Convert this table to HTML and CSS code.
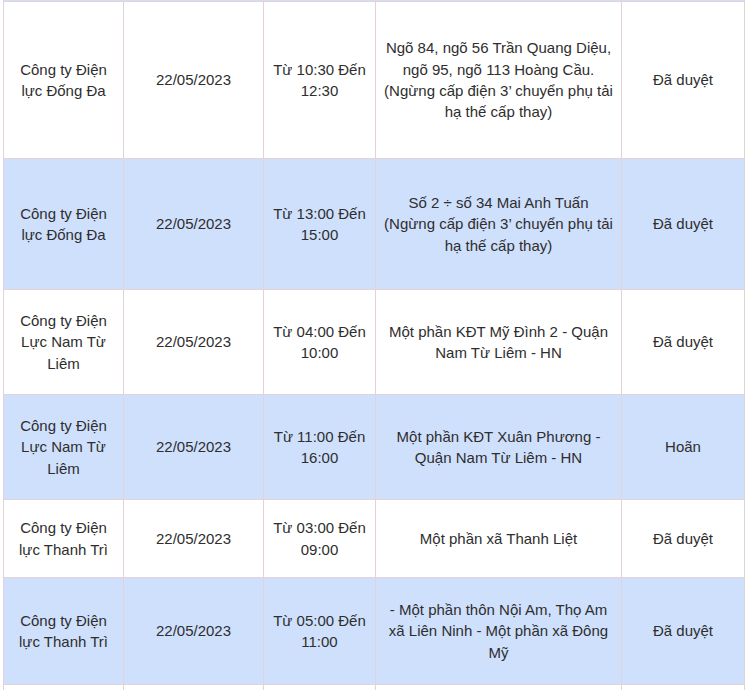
FILE: index.html
```html
<!DOCTYPE html>
<html lang="vi">
<head>
<meta charset="utf-8">
<link rel="stylesheet" href="styles.css">
</head>
<body>
<table class="grid">
  <colgroup>
    <col class="c1"><col class="c2"><col class="c3"><col class="c4"><col class="c5">
  </colgroup>
  <tbody>
    <tr class="tail blue"><td></td><td></td><td></td><td></td><td></td></tr>
    <tr class="r1">
      <td>Công ty Điện lực Đống Đa</td>
      <td>22/05/2023</td>
      <td>Từ 10:30 Đến 12:30</td>
      <td>Ngõ 84, ngõ 56 Trần Quang Diệu, ngõ 95, ngõ 113 Hoàng Cầu. (Ngừng cấp điện 3’ chuyển phụ tải hạ thế cấp thay)</td>
      <td>Đã duyệt</td>
    </tr>
    <tr class="r2 blue">
      <td>Công ty Điện lực Đống Đa</td>
      <td>22/05/2023</td>
      <td>Từ 13:00 Đến 15:00</td>
      <td>Số 2 ÷ số 34 Mai Anh Tuấn (Ngừng cấp điện 3’ chuyển phụ tải hạ thế cấp thay)</td>
      <td>Đã duyệt</td>
    </tr>
    <tr class="r3">
      <td>Công ty Điện Lực Nam Từ Liêm</td>
      <td>22/05/2023</td>
      <td>Từ 04:00 Đến 10:00</td>
      <td>Một phần KĐT Mỹ Đình 2 - Quận Nam Từ Liêm - HN</td>
      <td>Đã duyệt</td>
    </tr>
    <tr class="r4 blue">
      <td>Công ty Điện Lực Nam Từ Liêm</td>
      <td>22/05/2023</td>
      <td>Từ 11:00 Đến 16:00</td>
      <td>Một phần KĐT Xuân Phương - Quận Nam Từ Liêm - HN</td>
      <td>Hoãn</td>
    </tr>
    <tr class="r5">
      <td>Công ty Điện lực Thanh Trì</td>
      <td>22/05/2023</td>
      <td>Từ 03:00 Đến 09:00</td>
      <td>Một phần xã Thanh Liệt</td>
      <td>Đã duyệt</td>
    </tr>
    <tr class="r6 blue">
      <td>Công ty Điện lực Thanh Trì</td>
      <td>22/05/2023</td>
      <td>Từ 05:00 Đến 11:00</td>
      <td>- Một phần thôn Nội Am, Thọ Am xã Liên Ninh - Một phần xã Đông Mỹ</td>
      <td>Đã duyệt</td>
    </tr>
    <tr class="r7"><td></td><td></td><td></td><td></td><td></td></tr>
  </tbody>
</table>
</body>
</html>
```

FILE: styles.css
```css
html, body {
  margin: 0;
  padding: 0;
  background: #ffffff;
  overflow: hidden;
}
body {
  font-family: "Liberation Sans", Arial, sans-serif;
  font-size: 15px;
  color: #2e2e2e;
}
.grid {
  border-collapse: collapse;
  table-layout: fixed;
  width: 741px;
  margin-left: 3px;
}
.c1 { width: 120px; }
.c2 { width: 140px; }
.c3 { width: 112px; }
.c4 { width: 246px; }
.c5 { width: 123px; }
.grid td {
  border: 1px solid #e2d4d6;
  padding: 0 8px;
  text-align: center;
  vertical-align: middle;
  line-height: 21.3px;
}
.blue td { background: #cfe0fd; }
.tail td { height: 1px; padding: 0; border-top: none; }
.r1 td { height: 156px; }
.r2 td { height: 130px; }
.r3 td { height: 104px; }
.r4 td { height: 104px; }
.r5 td { height: 77px; }
.r6 td { height: 106px; }
.r7 td { height: 40px; }
```
